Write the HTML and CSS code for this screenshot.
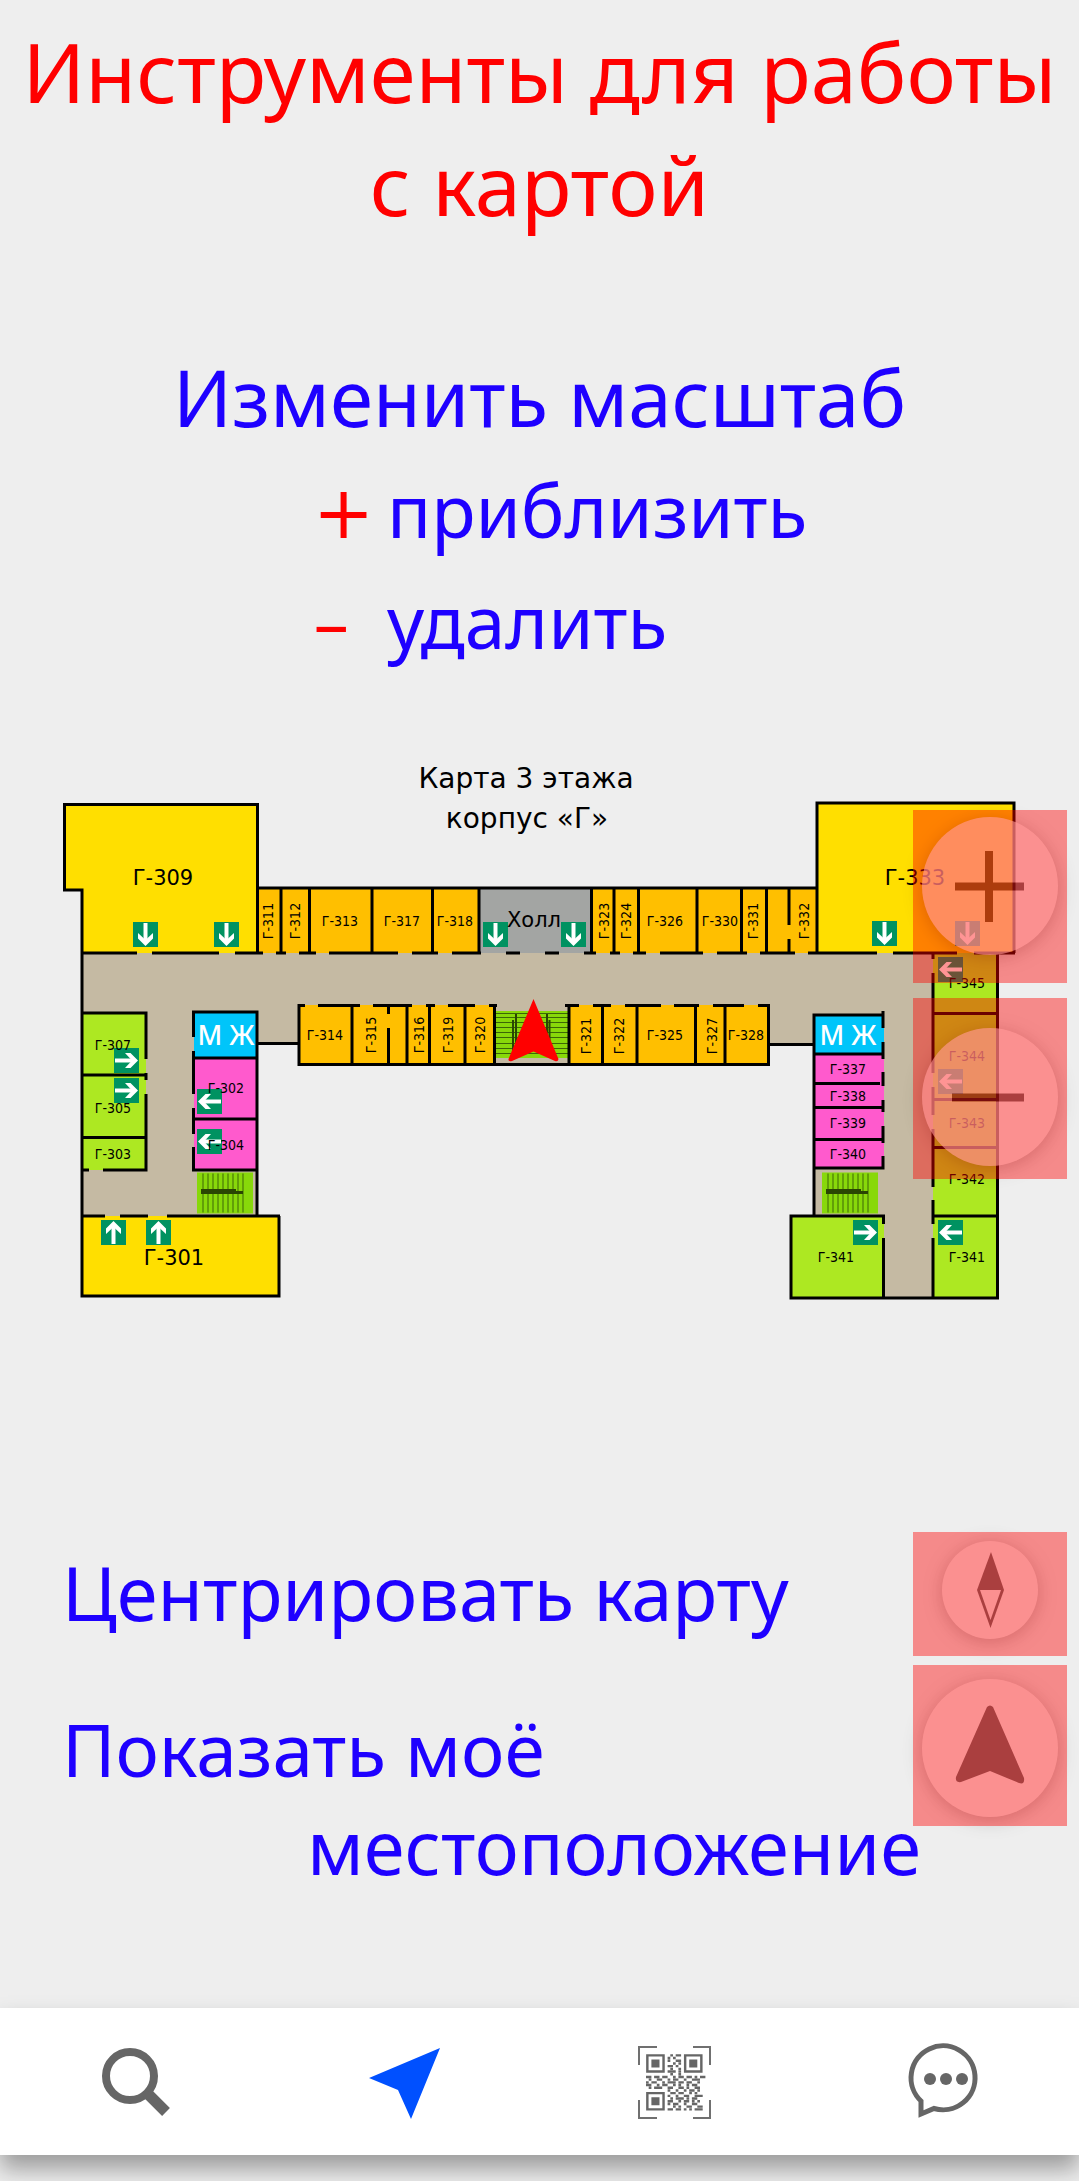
FILE: index.html
```html
<!DOCTYPE html>
<html lang="ru">
<head>
<meta charset="utf-8">
<meta name="viewport" content="width=device-width, initial-scale=1">
<title>Инструменты для работы с картой</title>
<link rel="stylesheet" href="styles.css">
</head>
<body>
<main class="guide">
  <h1 class="title">Инструменты для работы<br>с картой</h1>

  <section class="zoom-help">
    <h2 class="subtitle">Изменить масштаб</h2>
    <dl class="legend">
      <dt class="sign">+</dt><dd class="meaning">приблизить</dd>
      <dt class="sign">–</dt><dd class="meaning">удалить</dd>
    </dl>
  </section>

  <section class="map">
    <svg class="plan" viewBox="0 740 1079 580" role="img" aria-label="Карта 3 этажа, корпус «Г»">
      <defs>
        <g id="sign"><rect width="25" height="25" fill="#009261"/><path d="M12.500 1V21" stroke="#fff" stroke-width="4"/><path d="M5 11L12.500 18L20 11V16.500L12.500 24L5 16.500Z" fill="#fff"/></g>
        <g id="stairs-side">
          <rect width="56" height="41" fill="#88d80a"/>
          <path d="M6 1V40M11 1V40M16 1V40M21 1V40M26 1V40M31 1V40M36 1V40M41 1V40M46 1V40" stroke="#3c6606"/>
          <path d="M4 20H46M4 18H39" stroke="#2a4503" stroke-width="3"/>
        </g>
      </defs>

      <text class="caption" x="526" y="788">Карта 3 этажа</text>
      <text class="caption" x="527" y="828">корпус «Г»</text>

      <path class="floor" d="M82 953H998V1014H933V1298H883V1216H814V1044H768V1005H569V1065H494V1005H299V1043H257V1216H82Z"/>

      <path class="hall" d="M479 888H591V953H479Z"/>
      <path class="yellow" d="M64.500 804.500H257V953H82V890H64.500ZM817 803H1014V953H817ZM82 1216H279V1296H82Z"/>
      <path class="orange" d="M257 888H479V953H257ZM591 888H817V953H591ZM299 1005H494V1065H299ZM569 1005H768V1065H569Z"/>
      <path class="lime" d="M82 1013H146V1170H82ZM933 953H998V1298H933ZM791 1216H884V1298H791Z"/>
      <path class="pink" d="M194 1058H257V1170H194ZM814 1054H884V1168H814Z"/>
      <path class="blue" d="M194 1012H257V1058H194ZM814 1015H884V1054H814Z"/>

      <rect x="494" y="1011" width="75" height="47" fill="#88d80a"/>
      <path d="M494 1013.500H569M494 1017.500H569M494 1022.500H569M494 1027.500H569M494 1032.500H569M494 1037.500H569M494 1043.500H569M494 1048.500H569M494 1053.500H569" stroke="#3c6606"/>
      <path d="M513 1020V1052M516 1014V1052M547 1014V1052M549.500 1020V1052" stroke="#2a4503" stroke-width="2"/>
      <path d="M494 1064.500H569" class="wall"/>
      <use href="#stairs-side" x="197" y="1172.500"/>
      <use href="#stairs-side" x="822" y="1172.500"/>

      <g class="wall">
        <path d="M64.500 804.500H257.500V953M64.500 803V890H82V1296H279V1216M817 953V803H1014V953"/>
        <path d="M82 953H137M152 953H219M235 953H263M276 953H286M299 953H316M329 953H398M412 953H438M452 953H481M506 953H520M545 953H559M584 953H596M610 953H620M633 953H646M660 953H703M717 953H747M760 953H795M808 953H877M893 953H957M974 953H1015"/>
        <path d="M257 888H817M281 888V953M309.500 888V953M372 888V953M432.500 888V953M479 888V953M591.500 888V953M614 888V953M638.500 888V953M697 888V953M741.500 888V953M766.500 888V953M789 888V925M789 939V953"/>
        <path d="M299 1005.500H305M318 1005.500H360M373 1005.500H412M426 1005.500H435M448 1005.500H475M489 1005.500H497M565 1005.500H579M593 1005.500H611M625 1005.500H661M674 1005.500H699M713 1005.500H744M758 1005.500H768"/>
        <path d="M257 1043.500H299M299 1004V1064.500H768.500V1004M352 1005V1064M388.500 1005V1014M388.500 1028V1064M407 1005V1064M429.500 1005V1064M465 1005V1064M494.500 1005V1064M569 1005V1064M602.500 1005V1064M637 1005V1064M695.500 1005V1064M725 1005V1064M768 1044.500H814"/>
        <path d="M82 1013H146V1059M146 1073V1080M146 1094V1170H103M82 1170H89M82 1075H146M82 1137.500H146"/>
        <path d="M257 1216V1012H193.500V1037M193.500 1051V1094M193.500 1108V1134M193.500 1147V1170H257M194 1058H257M194 1119H257"/>
        <path d="M82 1216H105M120 1216H148M167 1216H280"/>
        <path d="M884 1015H814V1216M883 1011V1028M883 1042V1059M883 1072V1086M883 1100V1112M883 1126V1143M883 1156V1168H814M814 1054H883M814 1083.500H880M814 1107.500H883M814 1139.500H883"/>
        <path d="M883.500 1224V1216H791V1298H997.500V953M883.500 1238V1298M933 953V959M933 973V1073M933 1087V1115M933 1129V1187M933 1200V1224M933 1238V1298M933 1013.500H997M933 1099.500H997M933 1147.500H997M933 1216H997"/>
      </g>

      <g>
        <use href="#sign" x="133" y="922"/>
        <use href="#sign" x="214" y="922"/>
        <use href="#sign" x="483" y="922"/>
        <use href="#sign" x="561" y="922"/>
        <use href="#sign" x="872" y="921"/>
        <use href="#sign" x="955" y="921"/>
        <use href="#sign" transform="translate(126 1245) rotate(180)"/>
        <use href="#sign" transform="translate(171 1245) rotate(180)"/>
        <use href="#sign" transform="translate(114 1073) rotate(-90)"/>
        <use href="#sign" transform="translate(114 1103) rotate(-90)"/>
        <use href="#sign" transform="translate(853 1245) rotate(-90)"/>
        <use href="#sign" transform="translate(222 1089) rotate(90)"/>
        <use href="#sign" transform="translate(222 1129) rotate(90)"/>
        <use href="#sign" transform="translate(963 957) rotate(90)"/>
        <use href="#sign" transform="translate(963 1069) rotate(90)"/>
        <use href="#sign" transform="translate(963 1220) rotate(90)"/>
      </g>

      <g class="big">
        <text x="163" y="885">Г-309</text>
        <text x="915" y="885">Г-333</text>
        <text x="174" y="1265">Г-301</text>
        <text x="534" y="927">Холл</text>
      </g>
      <g class="wc">
        <text x="226" y="1045">М Ж</text>
        <text x="848" y="1045">М Ж</text>
      </g>
      <g class="room">
        <text x="340" y="926">Г-313</text>
        <text x="402" y="926">Г-317</text>
        <text x="455" y="926">Г-318</text>
        <text x="665" y="926">Г-326</text>
        <text x="720" y="926">Г-330</text>
        <text x="325" y="1040">Г-314</text>
        <text x="665" y="1040">Г-325</text>
        <text x="746" y="1040">Г-328</text>
        <text x="113" y="1050">Г-307</text>
        <text x="113" y="1113">Г-305</text>
        <text x="113" y="1159">Г-303</text>
        <text x="226" y="1093">Г-302</text>
        <text x="226" y="1150">Г-304</text>
        <text x="848" y="1074">Г-337</text>
        <text x="848" y="1101">Г-338</text>
        <text x="848" y="1128">Г-339</text>
        <text x="848" y="1159">Г-340</text>
        <text x="836" y="1262">Г-341</text>
        <text x="967" y="1262">Г-341</text>
        <text x="967" y="1184">Г-342</text>
        <text x="967" y="1128">Г-343</text>
        <text x="967" y="1061">Г-344</text>
        <text x="967" y="988">Г-345</text>
        <text transform="translate(273 921) rotate(-90)">Г-311</text>
        <text transform="translate(300 921) rotate(-90)">Г-312</text>
        <text transform="translate(609 921) rotate(-90)">Г-323</text>
        <text transform="translate(631 921) rotate(-90)">Г-324</text>
        <text transform="translate(758 921) rotate(-90)">Г-331</text>
        <text transform="translate(809 921) rotate(-90)">Г-332</text>
        <text transform="translate(376 1035) rotate(-90)">Г-315</text>
        <text transform="translate(424 1035) rotate(-90)">Г-316</text>
        <text transform="translate(453 1035) rotate(-90)">Г-319</text>
        <text transform="translate(485 1035) rotate(-90)">Г-320</text>
        <text transform="translate(591 1036) rotate(-90)">Г-321</text>
        <text transform="translate(624 1036) rotate(-90)">Г-322</text>
        <text transform="translate(717 1036) rotate(-90)">Г-327</text>
      </g>

      <path d="M533.500 999L558.500 1059Q558 1062 555 1061L533.500 1051.500L512 1061Q508 1062 508.500 1059Z" fill="#f00"/>
    </svg>

    <div class="zoom-tools">
      <div class="mark mark-in">
        <button class="round" aria-label="Приблизить"><svg viewBox="0 0 136 138"><path d="M33 69.500H102M67 34V105" stroke="#262626" stroke-width="8"/></svg></button>
      </div>
      <div class="mark mark-out">
        <button class="round" aria-label="Удалить"><svg viewBox="0 0 136 138"><path d="M30 69.500H102" stroke="#262626" stroke-width="8"/></svg></button>
      </div>
    </div>
  </section>

  <section class="place">
    <div class="place-text">
      <p class="line">Центрировать карту</p>
      <p class="line line-find">Показать моё</p>
      <p class="line line-end">местоположение</p>
    </div>
    <div class="place-tools">
      <div class="mark mark-center">
        <button class="round small" aria-label="Центрировать карту"><svg viewBox="0 0 96 98"><path d="M49 11L62 49L48.500 87L35 49Z" fill="#262626"/><path d="M38 49H59L48.500 79Z" fill="#fff"/></svg></button>
      </div>
      <div class="mark mark-find">
        <button class="round" aria-label="Показать моё местоположение"><svg viewBox="0 0 136 138"><path d="M65 28Q68 25 71 28L102 99Q103 106 97 104L68 92L39 103Q33 104 34 98Z" fill="#262626"/></svg></button>
      </div>
    </div>
  </section>
</main>

<nav class="tabs">
  <a class="tab" href="#search" aria-label="Поиск"><svg viewBox="0 0 80 80"><circle cx="35" cy="34" r="24" fill="none" stroke="#666" stroke-width="8"/><path d="M52 51L71 70" stroke="#666" stroke-width="11"/></svg></a>
  <a class="tab" href="#map" aria-label="Карта"><svg viewBox="0 0 80 80"><path d="M75 6L4 36L33 48L46 77Z" fill="#0050ff"/></svg></a>
  <a class="tab" href="#qr" aria-label="QR-код"><svg viewBox="0 0 80 80"><path d="M5 23V5H23M59 5H76V23M5 58V76H23M59 76H76V58" fill="none" stroke="#707070" stroke-width="2"/>
    <g transform="translate(12 12) scale(2.700)" fill="none" stroke="#666">
      <path d="M.5 .5H6.500V6.500H.5ZM14.500 .5H20.500V6.500H14.500ZM.5 14.500H6.500V20.500H.5Z" stroke-width="0.900"/>
      <path d="M2 3.500H5M16 3.500H19M2 17.500H5" stroke-width="3"/>
      <path stroke-width="0.900" d="M9 .5h1m1 0h2M8 1.500h1m1 0h1M8 2.500h1m2 0h2M10 3.500h1m1 0h1M8 4.500h2m1 0h1M9 5.500h1m2 0h1M8 6.500h3m1 0h1M9 7.500h1m2 0h1M0 8.500h2m1 0h2m1 0h2m2 0h1m1 0h2m1 0h2m1 0h1m1 0h2M1 9.500h1m2 0h2m2 0h1m1 0h2m2 0h1m2 0h3M0 10.500h1m1 0h2m2 0h1m1 0h3m1 0h2m1 0h2m2 0h1M0 11.500h2m2 0h1m1 0h2m2 0h1m1 0h1m2 0h1m1 0h2M1 12.500h1m1 0h3m2 0h2m2 0h2m1 0h1m2 0h2M8 13.500h1m2 0h1m2 0h1m1 0h2m1 0h1M9 14.500h2m1 0h2m2 0h1m1 0h1M8 15.500h1m2 0h1m2 0h2m2 0h3M9 16.500h1m1 0h3m1 0h1m1 0h2M8 17.500h2m2 0h1m1 0h2m1 0h1m1 0h1M8 18.500h1m1 0h2m2 0h1m2 0h2M10 19.500h1m1 0h1m2 0h2m2 0h2M8 20.500h2m1 0h2m1 0h1m1 0h1m1 0h3"/>
    </g></svg></a>
  <a class="tab" href="#chat" aria-label="Сообщения"><svg viewBox="0 0 80 80"><path d="M16 73V60A32 32 0 1 1 29 67.500Z" transform="translate(1 -1)" fill="none" stroke="#666" stroke-width="5"/><g fill="#666"><circle cx="26" cy="37" r="6"/><circle cx="42" cy="37" r="6"/><circle cx="58" cy="37" r="6"/></g></svg></a>
</nav>
</body>
</html>
```
FILE: styles.css
```css
* {
  box-sizing: border-box;
}

body {
  margin: 0;
  min-height: 100vh;
  display: flex;
  flex-direction: column;
  background: #eee;
  font-family: "Noto Sans", "Open Sans", sans-serif;
  color: #1e00ff;
}

.guide {
  flex: 1;
}

h1,
h2,
p,
dl,
dd {
  margin: 0;
  font-weight: 400;
}

.title {
  padding-top: 14px;
  font-size: 83px;
  line-height: 113px;
  text-align: center;
  color: #f00;
}

.zoom-help {
  padding: 100px 0 64px;
}

.subtitle {
  font-size: 78px;
  line-height: 114px;
  text-align: center;
}

.legend {
  display: grid;
  grid-template-columns: 74px auto;
  grid-auto-rows: 111px;
  justify-content: start;
  align-items: baseline;
  padding-left: 29%;
  font-size: 73px;
  line-height: 111px;
}

.sign {
  font-family: "DejaVu Sans", sans-serif;
  line-height: 100px;
  color: #f00;
}

.map {
  position: relative;
}

.plan {
  display: block;
  width: 100%;
  height: auto;
}

.plan text {
  text-anchor: middle;
  font-family: "DejaVu Sans", sans-serif;
  fill: #000;
}

.plan .caption {
  font-size: 28px;
}

.plan .big text {
  font-size: 21px;
}

.plan .room text {
  font-family: "DejaVu Sans Condensed", "DejaVu Sans", sans-serif;
  font-stretch: condensed;
  font-size: 14px;
}

.plan .wc text {
  font-family: "Noto Sans", sans-serif;
  font-size: 27px;
  font-weight: 500;
  fill: #fff;
}

.floor { fill: #c5baa3; }
.hall { fill: #a3a5a3; }
.yellow { fill: #ffdf00; }
.orange { fill: #ffbf00; }
.lime { fill: #ade822; }
.pink { fill: #ff5acd; }
.blue { fill: #00c5fa; }

.wall {
  fill: none;
  stroke: #000;
  stroke-width: 3;
}

.zoom-tools {
  position: absolute;
  top: 70px;
  right: 12px;
  display: flex;
  flex-direction: column;
  gap: 15px;
}

.mark {
  position: relative;
  width: 154px;
  display: flex;
  justify-content: center;
  align-items: flex-start;
}

.mark::after {
  content: "";
  position: absolute;
  inset: 0;
  background: rgba(255, 0, 0, 0.42);
  pointer-events: none;
}

.mark-in {
  height: 173px;
  padding-top: 7px;
}

.mark-out {
  height: 181px;
  padding-top: 30px;
}

.mark-center {
  height: 124px;
  padding-top: 9px;
}

.mark-find {
  height: 161px;
  padding-top: 14px;
}

.round {
  width: 136px;
  height: 138px;
  padding: 0;
  border: 0;
  border-radius: 50%;
  background: #fff;
  opacity: 0.64;
  box-shadow: 0 3px 18px rgba(0, 0, 0, 0.35);
}

.round svg {
  display: block;
  width: 100%;
}

.small {
  width: 96px;
  height: 98px;
}

.place {
  display: flex;
  justify-content: space-between;
  padding: 212px 12px 112px 62px;
}

.place-text {
  flex: 1;
  padding-top: 12px;
  font-size: 74px;
  line-height: 98px;
  white-space: nowrap;
}

.line-find {
  margin-top: 58px;
  font-size: 73px;
}

.line-end {
  margin-right: -8px;
  text-align: right;
}

.place-tools {
  display: flex;
  flex-direction: column;
  gap: 9px;
}

.tabs {
  display: flex;
  height: 147px;
  margin-bottom: 26px;
  background: #fff;
  box-shadow: 0 14px 22px rgba(0, 0, 0, 0.35);
}

.tab {
  flex: 1;
  display: flex;
  justify-content: center;
  align-items: center;
}

.tab svg {
  width: 80px;
  height: 80px;
}
```
